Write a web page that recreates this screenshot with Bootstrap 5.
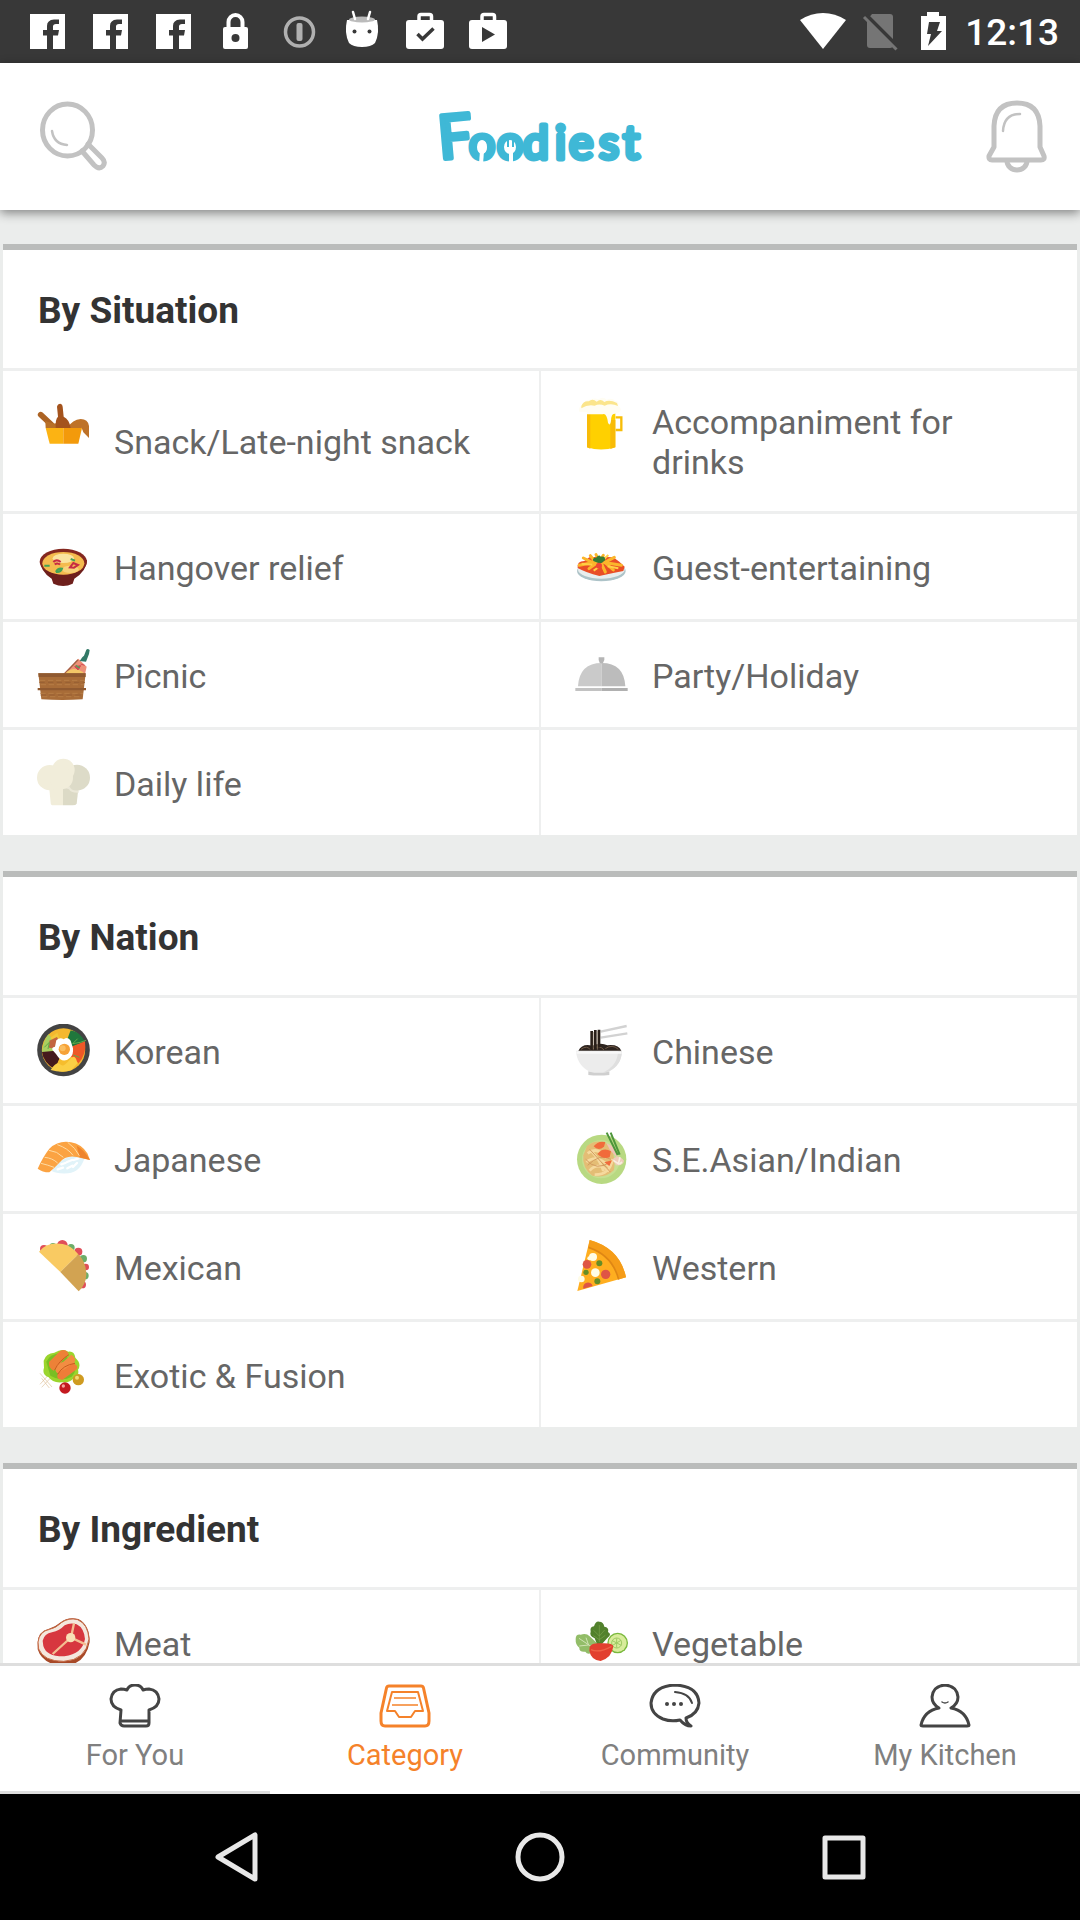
<!DOCTYPE html>
<html lang="en">
<head>
<meta charset="utf-8">
<meta name="viewport" content="width=device-width, initial-scale=1">
<title>Foodiest</title>
<link rel="stylesheet" href="https://cdn.jsdelivr.net/npm/bootstrap@5.3.0/dist/css/bootstrap.min.css">
<style>
  body { font-family: Roboto, "Liberation Sans", sans-serif; background: #ebedec; color: #666; }
  svg { display: block; flex: none; }
  .status-bar { background: #383838; height: 63px; padding: 0 21px 0 24px; }
  .status-left { gap: 15px; }
  .status-right { gap: 9px; }
  .clock { font-size: 37px; font-weight: 500; line-height: 66px; color: #fff; }
  .app-header { height: 147px; padding: 0 30px; box-shadow: 0 3px 10px rgba(0, 0, 0, .45); z-index: 1; }
  .feed { min-height: 0; scrollbar-width: none; padding: 34px 3px 0; gap: 36px; }
  .feed::-webkit-scrollbar { display: none; }
  .panel { border-top: 6px solid #babcbb; background: #eeefef; }
  .panel-title { font-size: 37px; line-height: 42px; padding: 40px 35px 36px; margin: 0 0 3px; background: #fff; color: #333; }
  .tiles { grid-template-columns: 1fr 1fr; gap: 3px 2px; }
  .tile { background: #fff; padding: 26px 34px; gap: 24px; min-height: 105px; color: inherit; }
  .tile svg { width: 53px; height: 53px; }
  .tile-label { font-size: 34px; line-height: 40px; padding: 5px 0 3px; }
  .tabs { border-top: 3px solid #dedede; }
  .tab-link { padding: 18px 0; gap: 9px; font-size: 29px; line-height: 36px; color: #808080; border-bottom: 3px solid #dedede; }
  .tab-link.active { color: #f5822a; border-color: #fff; }
  .system-bar { height: 126px; padding: 0 211px; background: #000; }
  .line-icon { fill: none; stroke: #444; stroke-width: 3; stroke-linejoin: round; stroke-linecap: round; }
  .logo-text { font-family: Lato, sans-serif; font-weight: 400; font-size: 46px; fill: #3fb8d6; stroke: #3fb8d6; stroke-width: 5; stroke-linejoin: round; }
  .logo-cap { font-size: 60px; }
</style>
<script src="https://cdn.jsdelivr.net/npm/bootstrap@5.3.0/dist/js/bootstrap.bundle.min.js"></script>
</head>
<body class="d-flex flex-column vh-100 overflow-hidden">

<div class="status-bar d-flex justify-content-between flex-shrink-0">
  <div class="status-left d-flex">
    <svg width="48" height="63" viewBox="0 0 48 63"><path fill="#fff" d="M6 14H41V49H29V35.500H34L35 30H29V26.500Q29 24 32 24H35V19.500H30Q23 20 23 26V30H19V35.500H23V49H6Z"/></svg>
    <svg width="48" height="63" viewBox="0 0 48 63"><path fill="#fff" d="M6 14H41V49H29V35.500H34L35 30H29V26.500Q29 24 32 24H35V19.500H30Q23 20 23 26V30H19V35.500H23V49H6Z"/></svg>
    <svg width="48" height="63" viewBox="0 0 48 63"><path fill="#fff" d="M6 14H41V49H29V35.500H34L35 30H29V26.500Q29 24 32 24H35V19.500H30Q23 20 23 26V30H19V35.500H23V49H6Z"/></svg>
    <svg width="48" height="63" viewBox="0 0 48 63"><rect x="10" y="27" width="25" height="22" rx="2" fill="#fff"/><path d="M15.500 28V22a7 7 0 0 1 14 0V28" fill="none" stroke="#fff" stroke-width="4"/><circle cx="22.500" cy="38" r="4" fill="#383838"/></svg>
    <svg width="48" height="63" viewBox="0 0 48 63"><circle cx="23.500" cy="32" r="14" fill="none" stroke="#b0b0b0" stroke-width="3.500"/><rect x="20.500" y="23" width="6" height="18" rx="2" fill="#b0b0b0"/></svg>
    <svg width="48" height="63" viewBox="0 0 48 63"><path d="M8 20H38Q41 33 36 43Q32 47 23 47Q14 47 10 43Q5 33 8 20Z" fill="#fff"/><ellipse cx="23" cy="19.500" rx="13" ry="3" fill="#bbb"/><path d="M14 12l2 7M31 12l-2 7" stroke="#fff" stroke-width="2.500" stroke-linecap="round"/><circle cx="15.500" cy="31.500" r="2" fill="#383838"/><circle cx="30.500" cy="31.500" r="2" fill="#383838"/></svg>
    <svg width="48" height="63" viewBox="0 0 48 63"><rect x="4" y="20" width="38" height="29" rx="3" fill="#fff"/><path d="M17 21V16.500Q17 14.500 19 14.500H27.500Q29.500 14.500 29.500 16.500V21" fill="none" stroke="#fff" stroke-width="3.500"/><path d="M15.500 34l5 5L31.500 28.500" fill="none" stroke="#383838" stroke-width="3.500"/></svg>
    <svg width="48" height="63" viewBox="0 0 48 63"><rect x="4" y="20" width="38" height="29" rx="3" fill="#fff"/><path d="M17 21V16.500Q17 14.500 19 14.500H27.500Q29.500 14.500 29.500 16.500V21" fill="none" stroke="#fff" stroke-width="3.500"/><path d="M17 27v15l13-7.500z" fill="#383838"/></svg>
  </div>
  <div class="status-right d-flex">
    <svg width="48" height="63" viewBox="0 0 48 63"><path d="M1 20Q12 13 24 13T47 20L24 49Z" fill="#fff"/></svg>
    <svg width="48" height="63" viewBox="0 0 48 63"><path d="M16 14H34Q37 14 37 17V45Q37 48 34 48H14Q11 48 11 45V20Z" fill="#757575"/><path d="M10.500 15.500L42 47" stroke="#383838" stroke-width="4"/><path d="M8 17L40.500 49.500" stroke="#757575" stroke-width="3"/></svg>
    <svg width="43" height="63" viewBox="0 0 43 63"><path d="M8 16H14V12H26V16H33V50H8Z" fill="#fff"/><path d="M16 22H27L24 31H29L15 46L18 34H14Z" fill="#383838"/></svg>
    <span class="clock">12:13</span>
  </div>
</div>

<header class="app-header d-flex align-items-center justify-content-between flex-shrink-0 bg-white position-relative">
  <button type="button" class="btn border-0 p-0" aria-label="Search">
    <svg width="80" height="72" viewBox="-8 0 80 72" fill="none" stroke="#c2c2c2" stroke-width="5" stroke-linecap="round"><ellipse cx="29.500" cy="29" rx="25" ry="26"/><path d="M14 30Q16 43 29 44" stroke-width="2.500"/><path d="M44 50L56 64Q61 69 65 65Q68 61 64 57L50 43"/></svg>
  </button>
  <a href="#" aria-label="Foodiest home">
    <svg width="220" height="90" viewBox="430 91 220 90">
      <text class="logo-text" x="440 469 497 523 555 569 599 623" y="158" rotate="-5 0"><tspan class="logo-cap">F</tspan>oodiest</text>
      <g fill="#fff" stroke="#fff"><ellipse cx="482" cy="146" rx="5" ry="7" stroke="none"/><path d="M482 150L481 163" stroke-width="4"/><ellipse cx="510" cy="146" rx="6" ry="7" stroke="none"/><g stroke="#3fb8d6" stroke-width="2"><path d="M508 139v7M513 139v7"/></g><path d="M511 150v13" stroke-width="4"/></g>
    </svg>
  </a>
  <button type="button" class="btn border-0 p-0" aria-label="Notifications">
    <svg width="80" height="76" viewBox="-14 0 80 76" fill="none" stroke="#c2c2c2" stroke-width="5" stroke-linejoin="round"><path d="M10 48V27Q11 4 33 4T56 27V48L60 57Q61 61 57 61H8Q4.500 61 5 57Z"/><path d="M23 62a10 9 0 0 0 20 0"/><path d="M19 32Q20 15 36 15" stroke-width="2.500" stroke-linecap="round"/></svg>
  </button>
</header>

<main class="feed d-flex flex-column flex-grow-1 overflow-auto">
  <section class="panel flex-shrink-0">
    <h2 class="panel-title fw-bold">By Situation</h2>
    <div class="tiles d-grid">
      <a href="#" class="tile d-flex text-decoration-none">
        <svg viewBox="111 111 159 159"><path d="M122 164L154 194" stroke="#ac6324" stroke-width="17" stroke-linecap="round"/><path d="M136 183Q160 192 168 190L200 204H137Z" fill="#b87028"/><path d="M202 204Q218 178 242 177Q264 177 267 198V234L250 217Q244 200 244 204Z" fill="#be7228"/><path d="M167 204Q166 176 174 170L171 140Q173 131 181 131Q188 132 188 140L191 170Q208 178 212 204Z" fill="#a4531d"/><path d="M137 204H190V251H149Z" fill="#fcb313"/><path d="M190 204H246L235 251H190Z" fill="#f39a0b"/></svg>
        <span class="tile-label align-self-center">Snack/Late-night snack</span></a>
      <a href="#" class="tile d-flex text-decoration-none">
        <svg viewBox="107 111 159 159"><path d="M229 172H246V210H229" fill="none" stroke="#f7bd08" stroke-width="7"/><path d="M143 160H228V262Q185 275 143 262Z" fill="#ffd000"/><path d="M143 160H153V266L143 262ZM213 180H228V262L213 267Z" fill="#f8bb08"/><path d="M143 156H228V162Q216 158 215 182Q212 201 206 188Q202 158 190 163H143Z" fill="#fffdf2"/><path d="M120 155Q116 138 134 133Q136 118 152 119Q166 112 177 118Q192 108 202 119Q217 112 228 123Q240 122 237 137Q252 149 237 158Z" fill="#fffdf3"/><path d="M126 138Q132 122 148 124Q160 114 172 125Q184 114 195 126Q210 117 233 129L236 138Q215 128 196 137Q180 130 166 137Q146 132 126 145Z" fill="#fbe58c"/></svg>
        <span class="tile-label align-self-center">Accompaniment for drinks</span></a>
      <a href="#" class="tile d-flex text-decoration-none">
        <svg viewBox="111 540 159 159"><path d="M120 600Q121 635 155 656L160 671Q190 685 218 671L223 656Q260 633 261 600Z" fill="#6e1f1c"/><ellipse cx="190" cy="605" rx="71" ry="39" fill="#84271f"/><ellipse cx="190" cy="610" rx="63" ry="34" fill="#f4bb4e"/><ellipse cx="190" cy="595" rx="32" ry="14" fill="#fae3a0"/><ellipse cx="211" cy="628" rx="25" ry="11" fill="#f8d27a"/><path d="M160 606q10-10 22 0M164 613q10-6 16 1M210 622l10-13 14 6-12 8z" fill="none" stroke="#c72b43" stroke-width="6"/><path d="M133 617h16M168 636q5-12 18-10q-4 12-18 10M212 597l13 5" fill="none" stroke="#43a455" stroke-width="6"/></svg>
        <span class="tile-label align-self-center">Hangover relief</span></a>
      <a href="#" class="tile d-flex text-decoration-none">
        <svg viewBox="107 540 159 159"><ellipse cx="186" cy="633" rx="73" ry="31" fill="#adc3c8"/><ellipse cx="186" cy="629" rx="70" ry="27" fill="#e9eeee"/><path d="M115 624Q112 603 135 603L150 592L180 590L222 592L240 605L256 620L252 633Q215 640 180 648Q140 638 115 624Z" fill="#e94e27"/><path d="M132 594l28 14M120 616l38-8M149 626l27-20M198 636l-12-26M222 630l-22-20M246 616l-46-8M225 592l-30 16M153 587l15 18M192 586l-12 20M170 584l10 20" stroke="#fbb62b" stroke-width="9" stroke-linecap="round"/><path d="M127 611l32 3M163 632l20-14M237 625l-32-6M207 585l-18 17" stroke="#ffcf45" stroke-width="6"/><path d="M162 603q-4-10 8-10q10-12 14-3q15-3 13 11q-12 12-20 8z" fill="#357b36"/><circle cx="179" cy="617" r="9" fill="#ee4633"/></svg>
        <span class="tile-label align-self-center">Guest-entertaining</span></a>
      <a href="#" class="tile d-flex text-decoration-none">
        <svg viewBox="111 864 159 159"><path d="M190 942L235 896L260 920L255 943Z" fill="#ee9178"/><path d="M191 944L234 899" stroke="#a16045" stroke-width="4"/><path d="M198 938Q220 916 250 937V945H193Z" fill="#f2c767"/><path d="M224 920l18-3-8 13zM242 912l12 4" fill="#d64a54" stroke="#d64a54" stroke-width="3"/><path d="M227 916l12 8" stroke="#5c9b5a" stroke-width="5"/><path d="M259 869Q263 865 269 870L267 882L258 905L239 903Q247 890 252 887Z" fill="#327967"/><path d="M115 940H257L248 1018Q188 1022 124 1018Z" fill="#a86c38"/><path d="M115 940H257V951H116ZM113 984H258V991H113Z" fill="#8f5930"/><path d="M120 961H254M122 974H252M121 1000H249M126 1010H246" stroke="#b67c45" stroke-width="3" stroke-dasharray="16 8"/><path d="M118 967H255M122 1005H248" stroke="#975f33" stroke-width="3" stroke-dasharray="16 10"/></svg>
        <span class="tile-label align-self-center">Picnic</span></a>
      <a href="#" class="tile d-flex text-decoration-none">
        <svg viewBox="107 864 159 159"><path d="M178 892H195V900L190 911H182L178 900Z" fill="#b5b5b5"/><path d="M116 979Q120 909 187 909V979Z" fill="#cacaca"/><path d="M187 909Q254 909 258 979H187Z" fill="#bcbcbc"/><path d="M108 984H187V993H108Z" fill="#c2c2c2"/><path d="M187 984H265V993H187Z" fill="#b0b0b0"/></svg>
        <span class="tile-label align-self-center">Party/Holiday</span></a>
      <a href="#" class="tile d-flex text-decoration-none">
        <svg viewBox="111 1188 159 159"><path d="M189 1278H236L230 1331Q228 1336 218 1336H189Z" fill="#dcdac6"/><path d="M147 1278H189V1336H160Q152 1336 152 1328Z" fill="#f1edda"/><circle cx="231" cy="1253" r="39" fill="#dddbc8"/><path d="M189 1279H208Q214 1294 236 1291V1298Q212 1299 207 1288L189 1282Z" fill="#ebe8d8"/><circle cx="149" cy="1253" r="38" fill="#f1edda"/><circle cx="190" cy="1230" r="34" fill="#f1edda"/><ellipse cx="184" cy="1254" rx="35" ry="34" fill="#f1edda"/></svg>
        <span class="tile-label align-self-center">Daily life</span></a>
      <div class="tile"></div>
    </div>
  </section>

  <section class="panel flex-shrink-0">
    <h2 class="panel-title fw-bold">By Nation</h2>
    <div class="tiles d-grid">
      <a href="#" class="tile d-flex text-decoration-none">
        <svg viewBox="111 132 159 159"><circle cx="190.500" cy="210" r="79" fill="#434343"/><circle cx="190.500" cy="210" r="65" fill="#f4b82f"/><path d="M190 210L145 163Q129 184 126 216L165 222Z" fill="#a9cf60"/><path d="M190 210L150 174L172 158Z" fill="#f3c83a"/><path d="M190 210L212 151Q245 158 254 187Z" fill="#20773c"/><path d="M190 210L255 184Q261 223 234 252Z" fill="#ee5827"/><path d="M190 210L126 216Q130 248 165 268Z" fill="#451a1d"/><path d="M190 210L165 266Q202 281 236 250Z" fill="#f6bd2d"/><path d="M152 270Q170 242 180 253T208 240T232 250L214 271Q185 280 152 270Z" fill="#fbcf45"/><path d="M190 210L147 203L148 182L171 171Z" fill="#c36440"/><path d="M158 211Q153 202 165 200L169 181Q180 170 191 178Q204 169 212 182L219 205Q221 225 210 233Q195 248 180 237Q173 230 168 222Z" fill="#fff"/><circle cx="193" cy="208" r="17" fill="#f6a238"/><circle cx="188" cy="205" r="9" fill="#fbbe60"/><path d="M233 176l-15 15 23-4 17-6M133 202l15-15-4 20M220 225l18 7" stroke="#62a949" stroke-width="3" fill="none"/></svg>
        <span class="tile-label align-self-center">Korean</span></a>
      <a href="#" class="tile d-flex text-decoration-none">
        <svg viewBox="107 132 159 159"><path d="M184 155L262 138M184 173L264 160" stroke="#d2d2d2" stroke-width="7"/><path d="M117 213Q128 190 158 197Q185 186 204 196Q238 192 246 213Z" fill="#2e241f"/><path d="M125 208q18-14 30 3m5-5q20-13 34 4m4-4q21-15 39 2" fill="none" stroke="#6f5946" stroke-width="3"/><path d="M157 153V211M168 150V210M179 149V202" stroke="#292019" stroke-width="8"/><path d="M162 156V209M174 153V209" stroke="#9b8a71" stroke-width="2"/><path d="M147 274H210V285Q178 288 147 285Z" fill="#cfcfcf"/><path d="M110 212H248Q247 256 207 275Q178 282 151 275Q112 254 110 212Z" fill="#ececec"/><path d="M248 212Q247 256 207 275L190 278Q235 258 236 214Z" fill="#dfdfdf"/><path d="M111 218H247" stroke="#f8f8f8" stroke-width="7"/></svg>
        <span class="tile-label align-self-center">Chinese</span></a>
      <a href="#" class="tile d-flex text-decoration-none">
        <svg viewBox="111 456 159 159"><path d="M155 573Q169 582 205 580Q241 575 254 533L221 525Q178 536 155 573Z" fill="#e1f3f9"/><path d="M173 568l16-5m-5-10l12-4m6 16l15-8m-16-11l15-6m3 21l12-12m-10-9l14-5" stroke="#fff" stroke-width="7" stroke-linecap="round"/><path d="M113 566Q129 530 148 506Q176 480 213 487Q244 492 262 520L270 540Q248 535 230 531Q198 524 178 548Q163 564 148 577Q127 577 113 566Z" fill="#fba342"/><path d="M230 497Q253 509 270 540L239 532Z" fill="#ee842c"/><path d="M123 550Q144 555 162 562M134 532Q157 534 173 549M147 511Q171 513 190 532M172 494Q204 505 219 526M203 487Q226 503 238 527" fill="none" stroke="#fedba3" stroke-width="3"/></svg>
        <span class="tile-label align-self-center">Japanese</span></a>
      <a href="#" class="tile d-flex text-decoration-none">
        <svg viewBox="107 456 159 159"><circle cx="187" cy="538" r="74" fill="#b8d982"/><circle cx="185" cy="538" r="57" fill="#c6df92"/><path d="M143 498Q178 471 216 499Q229 539 224 570Q199 596 159 587Q128 565 132 526Z" fill="#e4bd75"/><path d="M145 520Q174 498 201 533M141 546Q174 520 209 560M151 572Q174 544 210 574M166 584Q211 585 220 537M154 511Q184 542 192 573" fill="none" stroke="#f5d99e" stroke-width="8"/><path d="M139 538Q171 576 215 545M145 556Q181 519 215 538M151 508L213 576" fill="none" stroke="#d39c60" stroke-width="3"/><path d="M163 499Q176 481 198 486L194 500Q177 514 163 499ZM174 522Q192 500 215 514L211 532Q192 539 174 522ZM195 547l23-6-8 17z" fill="#f16b3b"/><path d="M201 489Q236 503 235 535L212 510Z" fill="#efc3b4"/><path d="M202 458L235 525M214 458L241 524" stroke="#4e963b" stroke-width="6"/><path d="M219 538q19-18 35 4-2 15-24 14z" fill="#f0cdbb"/><path d="M222 541l15 10 5-19M240 553l8-7" fill="none" stroke="#f9eee0" stroke-width="5"/></svg>
        <span class="tile-label align-self-center">S.E.Asian/Indian</span></a>
      <a href="#" class="tile d-flex text-decoration-none">
        <svg viewBox="111 780 159 159"><g fill="#e04e59"><circle cx="132" cy="807" r="12"/><circle cx="187" cy="796" r="16"/><circle cx="235" cy="815" r="12"/><circle cx="257" cy="861" r="10"/><circle cx="247" cy="914" r="11"/></g><g fill="#6cad69"><circle cx="159" cy="799" r="10"/><circle cx="213" cy="803" r="11"/><circle cx="250" cy="836" r="11"/><circle cx="255" cy="887" r="11"/></g><path d="M117 815Q141 784 188 792Q215 797 235 823L181 876Z" fill="#f9ca62"/><path d="M235 823Q258 845 259 884Q257 915 236 934L181 876Z" fill="#d2a352"/></svg>
        <span class="tile-label align-self-center">Mexican</span></a>
      <a href="#" class="tile d-flex text-decoration-none">
        <svg viewBox="107 780 159 159"><path d="M151 780Q242 805 260 892L114 933Z" fill="#ffae20"/><path d="M151 780Q242 805 260 892L240 898Q222 829 147 801Z" fill="#f59c18"/><path d="M147 802Q220 826 238 899" fill="none" stroke="#df8614" stroke-width="5"/><g fill="#df5545"><circle cx="143" cy="853" r="13"/><circle cx="199" cy="883" r="14"/><path d="M132 926A14 14 0 0 1 160 918Z"/></g><g fill="#fffce6"><circle cx="161" cy="831" r="12"/><circle cx="168" cy="878" r="13"/><circle cx="150" cy="835" r="6"/><circle cx="126" cy="897" r="10"/></g><g fill="#668d26"><circle cx="180" cy="850" r="9"/><circle cx="140" cy="877" r="8"/><circle cx="174" cy="904" r="9"/></g></svg>
        <span class="tile-label align-self-center">Western</span></a>
      <a href="#" class="tile d-flex text-decoration-none">
        <svg viewBox="111 1104 159 159"><path d="M120 1180l36 41M125 1195l23 29M120 1213l28-31M125 1222l36-38" stroke="#dfc19a" stroke-width="2"/><path d="M131 1142Q138 1119 163 1118Q187 1103 205 1115Q223 1112 226 1133Q246 1151 234 1169Q239 1187 222 1193Q209 1210 186 1207Q158 1210 146 1192Q125 1184 132 1163Z" fill="#9bd52d"/><path d="M139 1145Q150 1123 177 1120L220 1142Q235 1169 215 1190Q184 1207 151 1187Z" fill="#79bf23"/><path d="M147 1146L181 1112Q199 1106 206 1122L180 1150L161 1172Q145 1166 147 1146Z" fill="#ed8137"/><path d="M166 1169Q166 1150 190 1145L214 1124Q231 1134 222 1152L191 1179Q169 1186 166 1169Z" fill="#f28d42"/><path d="M172 1186Q174 1175 194 1168L219 1150Q237 1157 230 1168L188 1199Q170 1200 172 1186Z" fill="#ef7d38"/><path d="M164 1170Q177 1142 207 1124M173 1183Q189 1155 225 1150" fill="none" stroke="#ca5c20" stroke-width="3"/><circle cx="195" cy="1224" r="17" fill="#c41920"/><circle cx="190" cy="1218" r="5" fill="#f6a19c"/><circle cx="235" cy="1199" r="17" fill="#cf9b21"/><circle cx="231" cy="1193" r="6" fill="#f5da72"/></svg>
        <span class="tile-label align-self-center">Exotic &amp; Fusion</span></a>
      <div class="tile"></div>
    </div>
  </section>

  <section class="panel flex-shrink-0">
    <h2 class="panel-title fw-bold">By Ingredient</h2>
    <div class="tiles d-grid">
      <a href="#" class="tile d-flex text-decoration-none">
        <svg viewBox="111 138 159 159"><path d="M113 219Q114 183 147 176Q166 171 182 157Q204 139 235 147Q269 164 269 216Q257 284 190 288Q127 283 113 238Z" fill="#a84927"/><path d="M114 216Q118 184 149 178Q168 174 184 158Q206 142 233 149Q264 162 267 207Q258 270 191 274Q131 274 116 237Z" fill="#f4e7dd" stroke="#c86c47" stroke-width="3"/><path d="M128 212Q133 191 156 187Q179 182 194 166Q211 157 230 163Q252 174 255 207Q247 252 193 259Q139 260 130 228Z" fill="#d7373f"/><path d="M222 160L213 203L258 224M211 204L158 252" fill="none" stroke="#f4bd91" stroke-width="7"/><circle cx="212" cy="203" r="14" fill="#f8e1b6"/></svg>
        <span class="tile-label align-self-center">Meat</span></a>
      <a href="#" class="tile d-flex text-decoration-none">
        <svg viewBox="107 138 159 159"><path d="M109 207Q109 192 124 194Q141 188 151 199L175 221L163 247Q144 256 138 245Q119 247 120 233Q108 225 109 207Z" fill="#92bd68"/><path d="M119 205L168 238M140 203l8 23M120 228l27-3" fill="none" stroke="#d0e3b4" stroke-width="3"/><circle cx="235" cy="219" r="31" fill="#79b83c"/><circle cx="235" cy="219" r="27" fill="#d8ec9b"/><g fill="none" stroke="#9eca63" stroke-width="3"><circle cx="232" cy="219" r="15"/><path d="M232 205v28M219 212l27 14M245 211l-27 16"/></g><path d="M173 222L166 205Q149 197 154 185Q151 170 164 169Q169 152 180 155Q192 155 195 170Q210 172 206 186Q219 193 204 204L188 222Z" fill="#52812c"/><path d="M180 165V216M163 181l17 17 16-18M162 197l18 12 18-13" fill="none" stroke="#7ba34e" stroke-width="2"/><path d="M151 230Q158 219 180 220Q220 217 222 229Q218 263 184 273Q155 270 150 242Z" fill="#e2402f"/><path d="M155 239Q179 250 217 229" fill="none" stroke="#ee6247" stroke-width="4"/></svg>
        <span class="tile-label align-self-center">Vegetable</span></a>
    </div>
  </section>
</main>

<nav class="tabs nav nav-justified flex-shrink-0 flex-nowrap bg-white">
  <a href="#" class="tab-link nav-item d-flex flex-column align-items-center text-decoration-none">
    <svg class="line-icon" width="52" height="44" viewBox="0 0 52 44"><path d="M12 26Q2 23 2 15Q3 6 12 5Q15 5 18 6Q20 1 26 1T34 6Q37 5 40 5Q49 6 50 15Q50 23 40 26V39Q40 42 37 42H15Q12 42 11 39ZM12 37H40"/></svg>For You</a>
  <a href="#" class="tab-link active nav-item d-flex flex-column align-items-center text-decoration-none" aria-current="page">
    <svg width="52" height="44" viewBox="0 0 52 44" fill="none" stroke="#f5822a" stroke-width="3" stroke-linejoin="round"><path d="M10 2H42Q44 2 44.500 4L50 29V37Q50 42 46 42H6Q2 42 2 37V29L7.500 4Q8 2 10 2Z"/><path d="M13 8H39L44 27H36L32 33H20L16 27H8Z" stroke-width="2"/><path d="M15 14H37M13 21H39" stroke-width="1.500"/></svg>Category</a>
  <a href="#" class="tab-link nav-item d-flex flex-column align-items-center text-decoration-none">
    <svg class="line-icon" width="52" height="44" viewBox="0 0 52 44"><path d="M31 36Q22 38 14 35Q2 30 2 19Q4 2 26 1Q49 2 50 19Q49 30 37 34Q37 39 42 42Q36 42 31 36Z"/><path d="M26 8Q40 9 43 19" stroke-width="2"/><g fill="#444" stroke="none"><circle cx="18" cy="20" r="2"/><circle cx="25" cy="20" r="2"/><circle cx="32" cy="20" r="2"/></g></svg>Community</a>
  <a href="#" class="tab-link nav-item d-flex flex-column align-items-center text-decoration-none">
    <svg class="line-icon" width="52" height="44" viewBox="0 0 52 44"><path d="M20 24Q13 20 13 13Q14 2 26 1Q38 2 39 13Q39 20 32 24Q47 27 50 41Q50 42 48 42H4Q2 42 2 41Q5 27 20 24Z"/><path d="M23 18Q26 20 29 18" stroke-width="1.500"/></svg>My Kitchen</a>
</nav>

<div class="system-bar d-flex align-items-center justify-content-between flex-shrink-0">
  <button type="button" class="btn border-0 p-0" aria-label="Back"><svg width="50" height="52" viewBox="0 0 50 52" fill="none" stroke="#e8e8e8" stroke-width="5" stroke-linejoin="round"><path d="M44 4V48L7 26Z"/></svg></button>
  <button type="button" class="btn border-0 p-0" aria-label="Home"><svg width="52" height="52" viewBox="0 0 52 52" fill="none" stroke="#e8e8e8" stroke-width="5"><circle cx="26" cy="26" r="22"/></svg></button>
  <button type="button" class="btn border-0 p-0" aria-label="Recent apps"><svg width="50" height="52" viewBox="0 0 50 52" fill="none" stroke="#e8e8e8" stroke-width="5" stroke-linejoin="round"><rect x="6" y="7" width="38" height="39"/></svg></button>
</div>
</body>
</html>
